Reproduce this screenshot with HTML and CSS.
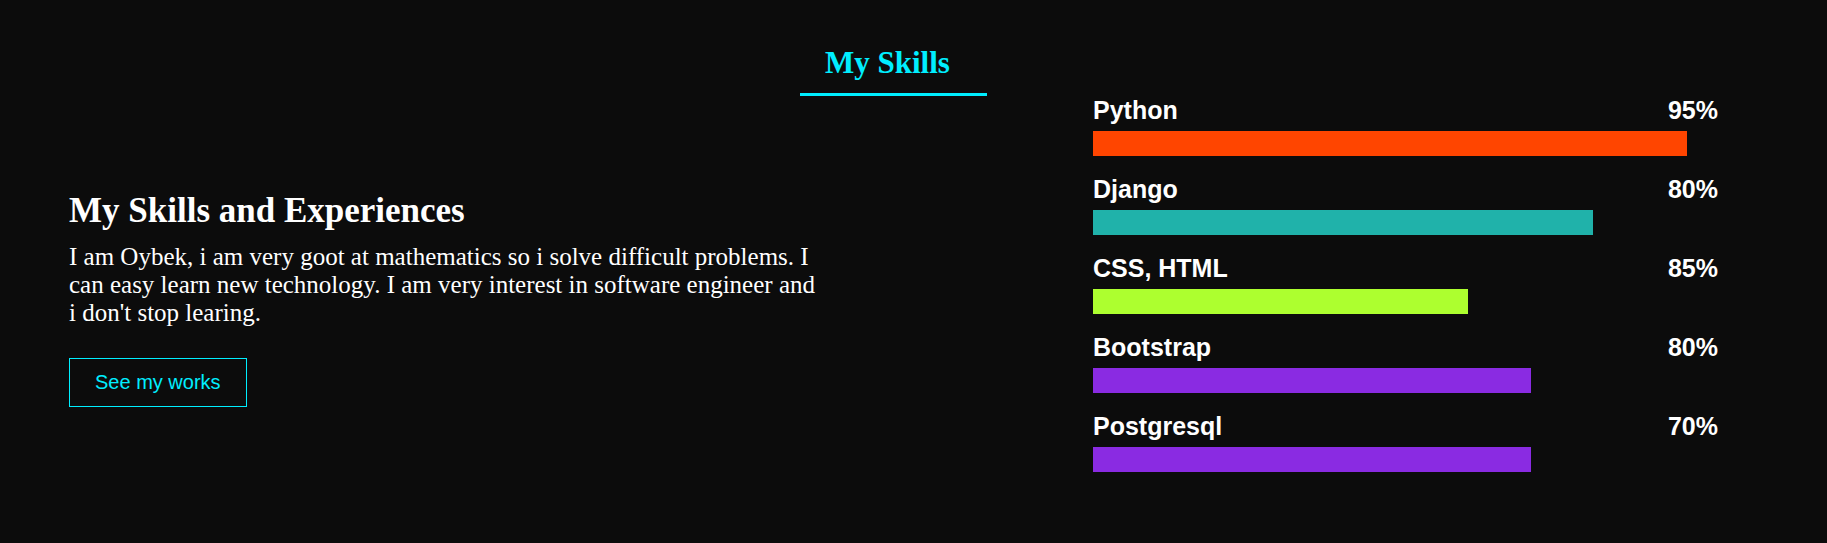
FILE: index.html
```html
<!DOCTYPE html>
<html lang="en">
<head>
<meta charset="utf-8">
<title>My Skills</title>
<link rel="stylesheet" href="styles.css">
</head>
<body>
<section class="skills">
  <div class="heading-wrap">
    <h2 class="heading">My Skills</h2>
  </div>
  <div class="content">
    <div class="about">
      <h3 class="about-title">My Skills and Experiences</h3>
      <p class="about-text">I am Oybek, i am very goot at mathematics so i solve difficult problems. I can easy learn new technology. I am very interest in software engineer and i don't stop learing.</p>
      <a class="btn" href="#">See my works</a>
    </div>
    <div class="bars">
      <div class="bar-row">
        <div class="bar-info"><span>Python</span><span>95%</span></div>
        <div class="bar"><div class="fill fill-python" style="width:95%"></div></div>
      </div>
      <div class="bar-row">
        <div class="bar-info"><span>Django</span><span>80%</span></div>
        <div class="bar"><div class="fill fill-django" style="width:80%"></div></div>
      </div>
      <div class="bar-row">
        <div class="bar-info"><span>CSS, HTML</span><span>85%</span></div>
        <div class="bar"><div class="fill fill-css" style="width:60%"></div></div>
      </div>
      <div class="bar-row">
        <div class="bar-info"><span>Bootstrap</span><span>80%</span></div>
        <div class="bar"><div class="fill fill-purple" style="width:70%"></div></div>
      </div>
      <div class="bar-row">
        <div class="bar-info"><span>Postgresql</span><span>70%</span></div>
        <div class="bar"><div class="fill fill-purple" style="width:70%"></div></div>
      </div>
    </div>
  </div>
</section>
</body>
</html>
```
FILE: styles.css
```css
html, body {
  margin: 0;
  padding: 0;
  background: #0c0c0c;
  color: #ffffff;
}

body {
  width: 1827px;
  height: 543px;
  overflow: hidden;
  font-family: "Liberation Serif", "Times New Roman", serif;
}

.skills {
  padding-top: 45px;
}

.heading-wrap {
  display: flex;
  justify-content: center;
  padding-right: 40px;
}

.heading {
  margin: 0;
  width: 187px;
  box-sizing: border-box;
  padding: 0 0 12px 25px;
  font-size: 31px;
  line-height: 36px;
  font-weight: bold;
  color: #00eeff;
  border-bottom: 3px solid #00eeff;
  white-space: nowrap;
}

.content {
  display: flex;
  align-items: flex-start;
  padding-left: 69px;
}

.about {
  width: 752px;
  padding-top: 95px;
}

.about-title {
  margin: 0;
  font-size: 35px;
  line-height: normal;
  font-weight: bold;
}

.about-text {
  margin: 12px 0 31px;
  font-size: 25px;
  line-height: 28px;
}

.btn {
  display: inline-block;
  padding: 12px 25px;
  border: 1px solid #00eeff;
  color: #00eeff;
  text-decoration: none;
  font-family: "Liberation Sans", Arial, sans-serif;
  font-size: 20px;
  line-height: 23px;
}

.bars {
  width: 625px;
  margin-left: 272px;
  font-family: "Liberation Sans", Arial, sans-serif;
}

.bar-row {
  margin-bottom: 19px;
}

.bar-row:last-child {
  margin-bottom: 0;
}

.bar-info {
  display: flex;
  justify-content: space-between;
  font-size: 25px;
  line-height: 29px;
  font-weight: bold;
}

.bar {
  margin-top: 6px;
  height: 25px;
}

.fill {
  height: 100%;
}

.fill-python { background: #ff4500; }
.fill-django { background: #20b2aa; }
.fill-css { background: #adff2f; }
.fill-purple { background: #8a2be2; }
```
